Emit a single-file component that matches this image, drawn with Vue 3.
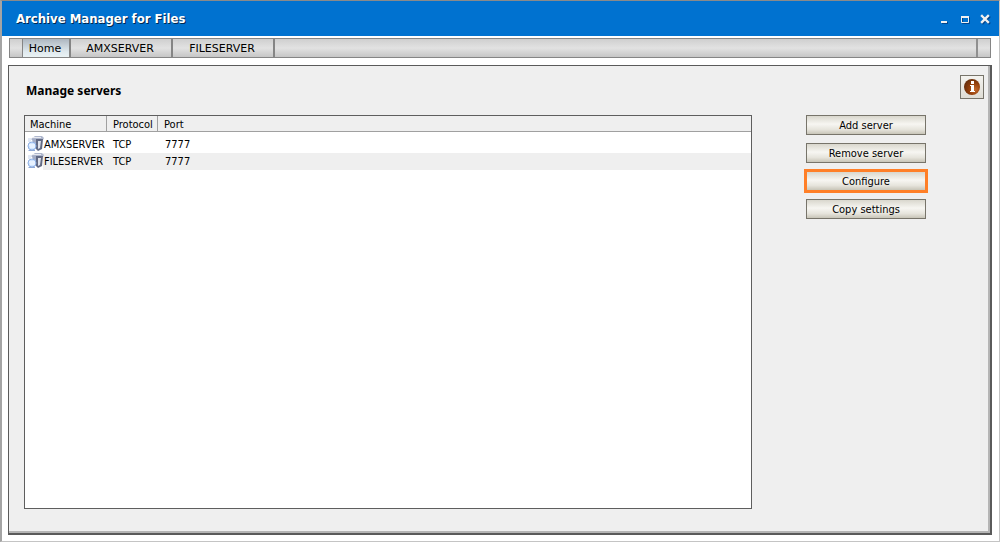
<script setup>
import { ref } from 'vue'

const tabs = ['Home', 'AMXSERVER', 'FILESERVER']
const activeTab = ref('Home')
const servers = [
  { machine: 'AMXSERVER', protocol: 'TCP', port: '7777' },
  { machine: 'FILESERVER', protocol: 'TCP', port: '7777' }
]
const actions = ['Add server', 'Remove server', 'Configure', 'Copy settings']
const highlighted = ref('Configure')
</script>

<template>
  <div class="window">
    <header class="titlebar">
      <h1>Archive Manager for Files</h1>
      <div class="controls">
        <button type="button" aria-label="Minimize">
          <svg width="12" height="13" viewBox="0 0 12 13"><path d="M5 10h6v2H5z" fill="#00458c" /><path d="M4 9h6v2H4z" fill="#f0f0f0" /></svg>
        </button>
        <button type="button" aria-label="Maximize">
          <svg width="12" height="13" viewBox="0 0 12 13"><path d="M4.500 5.500h7v6h-7z" fill="none" stroke="#00458c" /><path d="M3.500 4.500h7v6h-7z" fill="none" stroke="#f0f0f0" /><path d="M3 4h8v2H3z" fill="#f0f0f0" /></svg>
        </button>
        <button type="button" aria-label="Close">
          <svg width="12" height="13" viewBox="0 0 12 13"><path d="M4 5l6 6M10 5l-6 6" stroke="#00458c" stroke-width="2.500" stroke-linecap="square" /><path d="M3 4l6 6M9 4l-6 6" stroke="#f0f0f0" stroke-width="2.400" stroke-linecap="square" /></svg>
        </button>
      </div>
    </header>

    <nav class="tabs">
      <button
        v-for="tab in tabs"
        :key="tab"
        type="button"
        :class="['tab', { active: tab === activeTab }]"
        @click="activeTab = tab"
      >{{ tab }}</button>
      <span class="tab-end"></span>
    </nav>

    <main class="panel">
      <div class="panel-head">
        <h2>Manage servers</h2>
        <button type="button" class="info" aria-label="Information">
          <svg width="18" height="18" viewBox="0 0 18 18">
            <defs>
              <radialGradient id="ball" cx=".7" cy=".65" r=".7">
                <stop offset="0" stop-color="#c46a2c" />
                <stop offset=".55" stop-color="#94400c" />
                <stop offset="1" stop-color="#6a300c" />
              </radialGradient>
            </defs>
            <circle cx="9" cy="9" r="8" fill="url(#ball)" />
            <path d="M8 3h3v3H8zM7 7h4v6h1v1H7v-1h1V8H7z" fill="#fff" />
          </svg>
        </button>
      </div>

      <div class="panel-body">
        <div class="list">
          <table>
            <thead>
              <tr>
                <th class="col-machine">Machine</th>
                <th class="col-protocol">Protocol</th>
                <th>Port</th>
              </tr>
            </thead>
            <tbody>
              <tr v-for="server in servers" :key="server.machine">
                <td>
                  <div class="machine">
                    <svg width="17" height="17" viewBox="0 0 17 17">
                      <path d="M4 3l4-3h7l2 2-1 2H5z" fill="#aeb6cc" />
                      <path d="M5 3h6v10H7z" fill="#a4adc6" />
                      <path d="M9 3h7l-1 10-4 2-2-2z" fill="#626a84" />
                      <path d="M11 5h3l-1 7-2 1z" fill="#e0e2ea" />
                      <path d="M6 1h8v1H6z" fill="#e7e9ef" />
                      <path d="M1 3h3M1 5h3" stroke="#c3d2ec" />
                      <circle cx="5" cy="10" r="4" fill="#cfe4ff" stroke="#8fb0e4" />
                      <path d="M2 9h6M3 11h5" stroke="#fff" />
                      <path d="M1 14h7v1H2z" fill="#8fa9d8" />
                    </svg>
                    <span>{{ server.machine }}</span>
                  </div>
                </td>
                <td>{{ server.protocol }}</td>
                <td class="port">{{ server.port }}</td>
              </tr>
            </tbody>
          </table>
        </div>
        <div class="actions">
          <button
            v-for="action in actions"
            :key="action"
            type="button"
            :class="['action', { highlighted: action === highlighted }]"
          >{{ action }}</button>
        </div>
      </div>
    </main>
  </div>
</template>

<style>
body {
  margin: 0;
}
</style>

<style scoped>
.window {
  box-sizing: border-box;
  min-height: 100vh;
  display: flex;
  flex-direction: column;
  background: #fff;
  border: 1px solid #c4c4c4;
  border-top-color: #8a8a8a;
  border-left: 2px solid #a4a4a4;
  font: 11px/16px "DejaVu Sans Condensed", "DejaVu Sans", sans-serif;
  color: #000;
}
button {
  font: inherit;
  color: inherit;
  padding: 0;
  margin: 0;
}
h1,
h2 {
  margin: 0;
}
.titlebar {
  display: flex;
  align-items: center;
  justify-content: space-between;
  height: 35px;
  padding: 0 8px 0 14px;
  background: #0072d0;
  box-sizing: border-box;
}
h1 {
  font: bold 13px/17px "DejaVu Sans Condensed", "DejaVu Sans", sans-serif;
  color: #fff;
  text-shadow: 1px 1px 0 #00284f;
}
.controls {
  display: flex;
  gap: 9px;
}
.controls button {
  width: 12px;
  height: 13px;
  border: 0;
  background: none;
}
svg {
  display: block;
}
.tabs {
  display: flex;
  box-sizing: border-box;
  height: 20px;
  margin: 2px 8px 7px 7px;
  padding: 0 0 0 12px;
  border: 1px solid #858585;
  background: linear-gradient(#cfcfcf, #e2e2e2 50%, #c6c6c6);
  font: 11px/16px "DejaVu Sans", sans-serif;
}
.tab {
  min-width: 102px;
  padding: 2px 2px 0 0;
  border: 0;
  border-right: 2px solid #858585;
  background: none;
  font: inherit;
}
.tab.active {
  min-width: 49px;
  border-left: 1px solid #858585;
  background: linear-gradient(#adb6c0, #dfe9ee 70%, #eaf2f4);
}
.tab-end {
  margin-left: auto;
  width: 12px;
  border-left: 2px solid #909090;
}
.panel {
  flex: 1;
  display: flex;
  flex-direction: column;
  margin: 0 7px 6px 6px;
  padding: 9px 5px 24px 15px;
  border: 1px solid #5a5a5a;
  border-right-width: 2px;
  border-bottom-width: 2px;
  box-shadow: inset -2px -2px 0 #b5b5b5;
  background: #efefef;
}
.panel-head {
  display: flex;
  align-items: flex-end;
  justify-content: space-between;
  margin: 0 1px 16px 2px;
}
h2 {
  font: bold 12px/16px "Noto Sans", sans-serif;
}
.info {
  display: grid;
  place-items: center;
  box-sizing: border-box;
  width: 24px;
  height: 24px;
  border: 1px solid #77746a;
  background: linear-gradient(#f4f3ef, #dfddd5);
}
.panel-body {
  flex: 1;
  display: flex;
  gap: 54px;
  padding-right: 59px;
}
.list {
  flex: 1;
  border: 1px solid #5e5e5e;
  background: #fff;
}
table {
  width: 100%;
  table-layout: fixed;
  border-collapse: separate;
  border-spacing: 0;
}
th,
td {
  padding: 0 0 0 6px;
  font-weight: normal;
  text-align: left;
  white-space: nowrap;
}
th {
  height: 16px;
  box-sizing: border-box;
  line-height: 13px;
  padding: 2px 0 0 5px;
  background: #efefef;
  border-bottom: 1px solid #a0a0a0;
  border-right: 1px solid #a0a0a0;
}
th + th {
  padding-left: 6px;
}
th:last-child {
  border-right: 0;
}
.col-machine {
  width: 82px;
}
.col-protocol {
  width: 51px;
}
td {
  height: 17px;
  line-height: 17px;
}
td:first-child {
  padding-left: 2px;
}
tbody tr:first-child td {
  padding-top: 4px;
}
tbody tr:nth-child(even) {
  background: linear-gradient(to right, #fff 18px, #efefef 18px);
}
td.port {
  padding-left: 7px;
}
.machine {
  display: flex;
}
.actions {
  display: flex;
  flex-direction: column;
  gap: 8px;
  width: 120px;
}
.action {
  box-sizing: border-box;
  height: 20px;
  padding-top: 2px;
  border: 1px solid #77746a;
  background: linear-gradient(#d9d7cd, #f7f6f2 45%, #e6e4dc 75%, #c8c5b8);
  line-height: 16px;
}
.action.highlighted {
  outline: 3px solid #ff7f27;
  outline-offset: -1px;
  border-color: #7b8590;
}
</style>
